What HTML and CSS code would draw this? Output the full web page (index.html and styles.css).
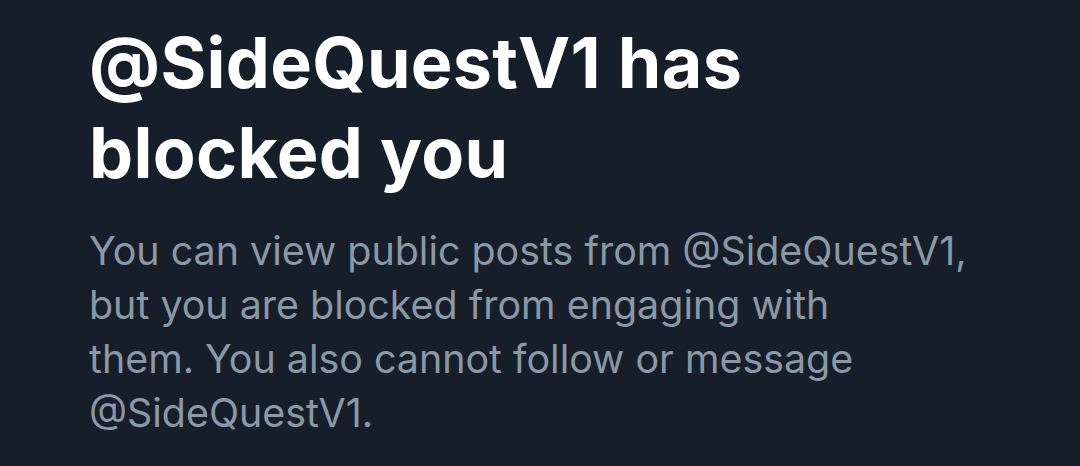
FILE: index.html
```html
<!DOCTYPE html>
<html lang="en">

<head>
    <meta charset="UTF-8">
    <meta name="viewport" content="width=device-width, initial-scale=1.0">
    <title>Blocked</title>
    <link rel="stylesheet" href="styles.css">
</head>

<body>

    <main class="blocked">
        <h1 class="blocked-title">@SideQuestV1 has<br>blocked you</h1>
        <p class="blocked-text">You can view public posts from @SideQuestV1,<br>but you are blocked from engaging with<br>them. You also cannot follow or message<br>@SideQuestV1.</p>
    </main>

</body>

</html>
```

FILE: styles.css
```css
html,
body {
    margin: 0;
    height: 100%;
    background-color: #161f29;
}

body {
    font-family: Inter, "Noto Sans", sans-serif;
    overflow: hidden;
}

.blocked {
    padding: 18px 0 0 89px;
}

.blocked-title {
    margin: 0;
    color: #ffffff;
    font-size: 70px;
    font-weight: 700;
    line-height: 90px;
    letter-spacing: 0.3px;
}

.blocked-text {
    margin: 26px 0 0;
    color: #8b98a5;
    font-size: 39.4px;
    font-weight: 400;
    line-height: 54px;
}
```
